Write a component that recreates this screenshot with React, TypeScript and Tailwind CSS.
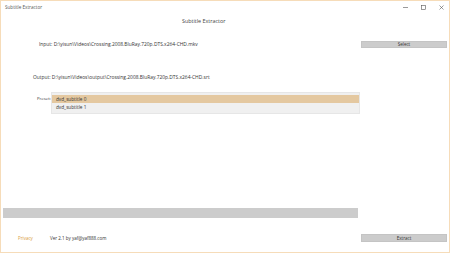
import React from 'react';

const font = { fontFamily: '"Segoe UI", "Open Sans", "Liberation Sans", sans-serif' };

export default function App() {
  return (
    <div
      className="w-[450px] h-[253px] bg-white border border-[#f6dcb9] flex flex-col text-[#333333] overflow-hidden"
      style={font}
    >
      {/* title bar */}
      <div className="h-[12px] flex items-center justify-between pl-[4px] pr-[5px]">
        <span className="text-[4.6px] text-[#555]">Subtitle Extractor</span>
        <div className="flex items-center gap-[13px]">
          <svg width="5" height="5" viewBox="0 0 5 5"><line x1="0" y1="2.5" x2="5" y2="2.5" stroke="#555" strokeWidth="0.6" /></svg>
          <svg width="5" height="5" viewBox="0 0 5 5"><rect x="0.5" y="0.5" width="4" height="4" fill="none" stroke="#555" strokeWidth="0.6" /></svg>
          <svg width="5" height="5" viewBox="0 0 5 5"><path d="M0.5 0.5 L4.5 4.5 M4.5 0.5 L0.5 4.5" stroke="#555" strokeWidth="0.6" /></svg>
        </div>
      </div>

      <div className="ml-[181px] text-[5.4px] mt-[4px] leading-[8px] text-[#444]">Subtitle Extractor</div>

      {/* input row */}
      <div className="flex items-center mt-[16px] h-[7px]">
        <span className="ml-[38px] text-[4.9px] leading-[7px] flex-1">
          Input: D:\yisun\Videos\Crossing.2008.BluRay.720p.DTS.x264-CHD.mkv
        </span>
        <button className="w-[86px] h-[7px] bg-[#cccccc] text-[4.5px] leading-[5px] mr-[2px] border border-[#c4c4c4]">
          Select
        </button>
      </div>

      {/* output row */}
      <div className="mt-[26px] ml-[32px] text-[4.9px] leading-[7px]">
        Output: D:\yisun\Videos\output\Crossing.2008.BluRay.720p.DTS.x264-CHD.srt
      </div>

      {/* preset */}
      <div className="flex items-start mt-[11px]">
        <span className="ml-[36px] w-[14px] text-[4.3px] leading-[7px] mt-[3px]">Preset:</span>
        <div className="w-[309px] h-[22px] bg-[#f0f0f0] border border-[#e6e6e6] pt-[2px] flex flex-col">
          <div className="h-[8px] bg-[#e4c8a0] text-[4.7px] leading-[8px] pl-[4px]">dvd_subtitle 0</div>
          <div className="h-[8px] text-[4.7px] leading-[8px] pl-[4px]">dvd_subtitle 1</div>
        </div>
      </div>

      {/* progress bar */}
      <div className="mt-[94px] ml-[2px] w-[355px] h-[10px] bg-[#cccccc]" />

      {/* footer */}
      <div className="flex items-center mt-[16px] h-[8px]">
        <span className="ml-[17px] w-[32px] text-[4.5px] text-[#d89a3a]">Privacy</span>
        <span className="text-[4.5px] flex-1">Ver 2.1 by yaf@yaf888.com</span>
        <button className="w-[86px] h-[8px] bg-[#cccccc] text-[4.5px] leading-[6px] mr-[2px] border border-[#c4c4c4]">
          Extract
        </button>
      </div>
    </div>
  );
}
